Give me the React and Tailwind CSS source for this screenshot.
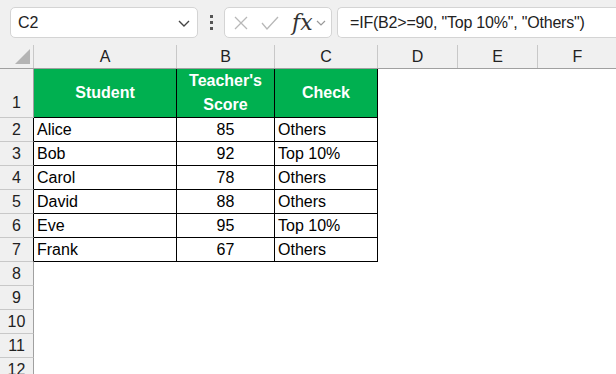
import React from "react"

const cols = [
  { label: "A", w: "w-[143px]" },
  { label: "B", w: "w-[98px]" },
  { label: "C", w: "w-[103px]" },
  { label: "D", w: "w-[80px]" },
  { label: "E", w: "w-[80px]" },
  { label: "F", w: "w-[80px]" },
]

const rows = [
  ["Alice", "85", "Others"],
  ["Bob", "92", "Top 10%"],
  ["Carol", "78", "Others"],
  ["David", "88", "Others"],
  ["Eve", "95", "Top 10%"],
  ["Frank", "67", "Others"],
]

function RowHead({ n, dark, tall }) {
  return (
    <div
      className={`w-[34px] shrink-0 bg-[#f0f0f0] border-b border-b-[#c8c8c8] border-r ${
        dark ? "border-r-black" : "border-r-[#a0a0a0]"
      } flex ${tall ? "items-end pb-[2px]" : "items-center"} justify-center text-[16px] text-[#222]`}
    >
      {n}
    </div>
  )
}

export default function App() {
  return (
    <div className="w-[616px] h-[374px] overflow-hidden bg-white text-black font-['Liberation_Sans',Arial,sans-serif]">
      {/* formula bar */}
      <div className="h-[45px] bg-[#f0f0f0] flex items-start pt-[7px] pl-[10px]">
        <div className="w-[188px] h-[31px] bg-white border border-[#d4d4d4] rounded-[5px] flex items-center justify-between pl-[7px] pr-[6px]">
          <span className="text-[16px] text-[#222]">C2</span>
          <svg width="14" height="10" viewBox="0 0 14 10" fill="none" stroke="#444" strokeWidth="1.4">
            <path d="M2 3l5 5 5-5" />
          </svg>
        </div>
        <div className="w-[26px] h-[31px] flex flex-col items-center justify-center gap-[3px]">
          <div className="w-[3px] h-[3px] bg-[#555]" />
          <div className="w-[3px] h-[3px] bg-[#555]" />
          <div className="w-[3px] h-[3px] bg-[#555]" />
        </div>
        <div className="w-[108px] h-[31px] bg-white border border-[#d4d4d4] rounded-[5px] flex items-center pl-[8px]">
          <svg width="16" height="16" viewBox="0 0 16 16" fill="none" stroke="#b8b8b8" strokeWidth="1.3">
            <path d="M2 2l12 12M14 2L2 14" />
          </svg>
          <svg className="ml-[12px]" width="18" height="16" viewBox="0 0 18 16" fill="none" stroke="#b8b8b8" strokeWidth="1.3">
            <path d="M1 8l5 6L17 2" />
          </svg>
          <span className="ml-[13px] text-[22px] italic text-[#333] font-['DejaVu_Serif',serif] leading-none">
            fx
          </span>
          <svg className="ml-[3px]" width="10" height="8" viewBox="0 0 10 8" fill="none" stroke="#999" strokeWidth="1.2">
            <path d="M1 2l4 4 4-4" />
          </svg>
        </div>
        <div className="ml-[5px] flex-1 h-[31px] bg-white border border-[#d4d4d4] border-r-0 rounded-l-[5px] flex items-center pl-[12px]">
          <span className="text-[16px] text-[#222] tracking-[-0.2px]">=IF(B2&gt;=90, "Top 10%", "Others")</span>
        </div>
      </div>

      {/* column header */}
      <div className="flex h-[24px] bg-[#f0f0f0] border-b border-[#a0a0a0]">
        <div className="w-[34px] shrink-0 border-r border-[#c8c8c8] relative">
          <div className="absolute left-[15px] top-[4px] w-0 h-0 border-l-[15px] border-l-transparent border-b-[15px] border-b-[#b4b4b4]" />
        </div>
        {cols.map((c) => (
          <div
            key={c.label}
            className={`${c.w} shrink-0 border-r border-[#c8c8c8] flex items-center justify-center text-[16px] text-[#222]`}
          >
            {c.label}
          </div>
        ))}
      </div>

      {/* row 1 */}
      <div className="flex h-[49px]">
        <RowHead n={1} tall />
        <div className="w-[143px] shrink-0 bg-[#00b050] border-b border-r border-black flex items-center justify-center text-white font-bold text-[16px]">
          Student
        </div>
        <div className="w-[98px] shrink-0 bg-[#00b050] border-b border-r border-black flex items-center justify-center text-center text-white font-bold text-[16px] leading-[24px]">
          Teacher's
          <br />
          Score
        </div>
        <div className="w-[103px] shrink-0 bg-[#00b050] border-b border-r border-black flex items-center justify-center text-white font-bold text-[16px]">
          Check
        </div>
      </div>

      {/* data rows */}
      {rows.map((r, i) => (
        <div key={r[0]} className="flex h-[24px]">
          <RowHead n={i + 2} dark />
          <div className="w-[143px] shrink-0 border-b border-r border-black flex items-center pl-[3px] text-[16px]">
            {r[0]}
          </div>
          <div className="w-[98px] shrink-0 border-b border-r border-black flex items-center justify-center text-[16px]">
            {r[1]}
          </div>
          <div className="w-[103px] shrink-0 border-b border-r border-black flex items-center pl-[3px] text-[16px]">
            {r[2]}
          </div>
        </div>
      ))}

      {[8, 9, 10, 11, 12].map((n) => (
        <div key={n} className="flex h-[24px]">
          <RowHead n={n} />
        </div>
      ))}
    </div>
  )
}
